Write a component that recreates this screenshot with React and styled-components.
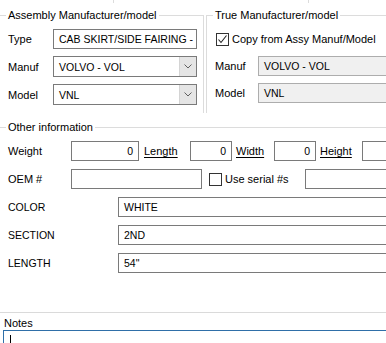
import React from 'react';
import styled, { createGlobalStyle } from 'styled-components';

const GlobalStyle = createGlobalStyle`
  html, body {
    margin: 0;
    padding: 0;
    background: #ffffff;
  }
  body {
    font-family: "Liberation Sans", Arial, sans-serif;
    font-size: 11px;
    color: #000000;
  }
`;

const Page = styled.div`
  width: 386px;
  height: 343px;
  overflow: hidden;
  background: #ffffff;
`;

const TopStrip = styled.div`
  display: flex;
  height: 3px;
`;

const StripCell = styled.div`
  flex: 0 0 ${(p) => p.$w}px;
  border-right: 1px solid #dcdcdc;
`;

const TopRow = styled.div`
  display: flex;
  margin-top: 5px;
`;

const Group = styled.fieldset`
  margin: 0;
  min-width: 0;
  border: 1px solid #dcdcdc;
  border-left: ${(p) => (p.$left ? '1px solid #dcdcdc' : 'none')};
  border-right: ${(p) => (p.$right ? '1px solid #dcdcdc' : 'none')};
  border-bottom: ${(p) => (p.$bottom ? '1px solid #dcdcdc' : 'none')};
  padding: 0 ${(p) => p.$pr || 0}px ${(p) => p.$pb || 0}px ${(p) => p.$pl || 8}px;
  width: ${(p) => (p.$w ? `${p.$w}px` : 'auto')};
  flex: ${(p) => (p.$w ? '0 0 auto' : '1')};
  margin-left: ${(p) => p.$ml || 0}px;
  margin-top: ${(p) => p.$mt || 0}px;
  box-sizing: border-box;
`;

const Legend = styled.legend`
  padding: 0 2px;
  margin-left: -2px;
  line-height: 15px;
  height: 15px;
  white-space: nowrap;
`;

const Rows = styled.div`
  display: flex;
  flex-direction: column;
  gap: ${(p) => p.$gap}px;
  margin-top: ${(p) => p.$mt}px;
  padding-left: ${(p) => p.$pl || 0}px;
`;

const Row = styled.div`
  display: flex;
  align-items: center;
  height: ${(p) => p.$h || 20}px;
  white-space: nowrap;
`;

const Label = styled.div`
  flex: 0 0 ${(p) => p.$w}px;
  white-space: nowrap;
  padding-left: ${(p) => p.$pl || 0}px;
  box-sizing: border-box;
  text-decoration: ${(p) => (p.$under ? 'underline' : 'none')};
  text-underline-offset: 2px;
  font-size: ${(p) => (p.$caps ? '10.5px' : 'inherit')};
`;

const TextBox = styled.div`
  flex: 0 0 ${(p) => p.$w}px;
  height: ${(p) => p.$h || 20}px;
  box-sizing: border-box;
  border: 1px solid ${(p) => (p.$readonly ? '#adadad' : '#7a7a7a')};
  background: ${(p) => (p.$readonly ? '#f0f0f0' : '#ffffff')};
  display: flex;
  align-items: center;
  justify-content: ${(p) => (p.$right ? 'flex-end' : 'flex-start')};
  padding: 0 5px;
  font-size: 10.5px;
  white-space: nowrap;
  overflow: hidden;
`;

const Combo = styled.div`
  flex: 0 0 ${(p) => p.$w}px;
  height: 21px;
  box-sizing: border-box;
  border: 1px solid #7a7a7a;
  display: flex;
  background: #ffffff;
`;

const ComboText = styled.div`
  flex: 1;
  display: flex;
  align-items: center;
  padding-left: 5px;
  font-size: 10.5px;
`;

const ComboButton = styled.div`
  flex: 0 0 16px;
  background: #e5e5e5;
  border-left: 1px solid #d4d4d4;
  display: flex;
  align-items: center;
  justify-content: center;
`;

const Check = styled.div`
  flex: 0 0 13px;
  height: 13px;
  box-sizing: border-box;
  border: 1px solid #333333;
  background: #ffffff;
  margin-left: ${(p) => p.$ml || 0}px;
  margin-right: 3px;
  display: flex;
  align-items: center;
  justify-content: center;
`;

const Spacer = styled.div`
  flex: 0 0 ${(p) => p.$w}px;
`;

const Separator = styled.div`
  height: 1px;
  background: #dadada;
  margin-top: ${(p) => p.$mt}px;
`;

const NotesLabel = styled.div`
  padding-left: 4px;
  margin-top: 3px;
  line-height: 14px;
  height: 14px;
`;

const NotesBox = styled.div`
  margin-left: 3px;
  height: 30px;
  border: 1px solid #2f6fa8;
  border-right: none;
  padding: 4px 0 0 6px;
  box-sizing: border-box;
`;

const Caret = styled.span`
  display: block;
  width: 1px;
  height: 9px;
  background: #000000;
`;

const Chevron = () => (
  <svg width="8" height="5" viewBox="0 0 8 5">
    <path d="M0.5 0.5 L4 4 L7.5 0.5" fill="none" stroke="#606060" strokeWidth="1" />
  </svg>
);

const CheckMark = () => (
  <svg width="11" height="11" viewBox="0 0 11 11">
    <path d="M1.5 5.5 L4 8.5 L9.5 1.5" fill="none" stroke="#222222" strokeWidth="1.1" />
  </svg>
);

const extraFields = [
  { label: 'COLOR', value: 'WHITE' },
  { label: 'SECTION', value: '2ND' },
  { label: 'LENGTH', value: '54"' },
];

export default function App() {
  return (
    <Page>
      <GlobalStyle />
      <TopStrip>
        <StripCell $w={113} />
        <StripCell $w={194} />
      </TopStrip>
      <TopRow>
        <Group $w={204} $right $pr={6} $pb={8}>
          <Legend>Assembly Manufacturer/model</Legend>
          <Rows $gap={7} $mt={6}>
            <Row>
              <Label $w={45}>Type</Label>
              <TextBox $w={144}>CAB SKIRT/SIDE FAIRING -</TextBox>
            </Row>
            <Row $h={21}>
              <Label $w={45}>Manuf</Label>
              <Combo $w={144}>
                <ComboText>VOLVO - VOL</ComboText>
                <ComboButton><Chevron /></ComboButton>
              </Combo>
            </Row>
            <Row $h={21}>
              <Label $w={45}>Model</Label>
              <Combo $w={144}>
                <ComboText>VNL</ComboText>
                <ComboButton><Chevron /></ComboButton>
              </Combo>
            </Row>
          </Rows>
        </Group>
        <Group $left $ml={2} $pl={8} $pb={8}>
          <Legend>True Manufacturer/model</Legend>
          <Rows $gap={7} $mt={6}>
            <Row>
              <Check $ml={1}><CheckMark /></Check>
              <span>Copy from Assy Manuf/Model</span>
            </Row>
            <Row>
              <Label $w={43}>Manuf</Label>
              <TextBox $w={200} $readonly>VOLVO - VOL</TextBox>
            </Row>
            <Row>
              <Label $w={43}>Model</Label>
              <TextBox $w={200} $readonly>VNL</TextBox>
            </Row>
          </Rows>
        </Group>
      </TopRow>

      <Group $mt={7}>
        <Legend>Other information</Legend>
        <Rows $gap={8} $mt={6}>
          <Row>
            <Label $w={63}>Weight</Label>
            <TextBox $w={68} $right>0</TextBox>
            <Label $w={51} $pl={5} $under>Length</Label>
            <TextBox $w={42} $right>0</TextBox>
            <Label $w={42} $pl={4} $under>Width</Label>
            <TextBox $w={42} $right>0</TextBox>
            <Label $w={46} $pl={4} $under>Height</Label>
            <TextBox $w={60} $right />
          </Row>
          <Row>
            <Label $w={63}>OEM #</Label>
            <TextBox $w={131} />
            <Spacer $w={7} />
            <Check />
            <Label $w={80}>Use serial #s</Label>
            <TextBox $w={120} />
          </Row>
        </Rows>
      </Group>

      <Rows $gap={8} $mt={8} $pl={8}>
        {extraFields.map((f) => (
          <Row key={f.label}>
            <Label $w={110} $caps>{f.label}</Label>
            <TextBox $w={300}>{f.value}</TextBox>
          </Row>
        ))}
      </Rows>

      <Separator $mt={39} />
      <NotesLabel>Notes</NotesLabel>
      <NotesBox><Caret /></NotesBox>
    </Page>
  );
}
